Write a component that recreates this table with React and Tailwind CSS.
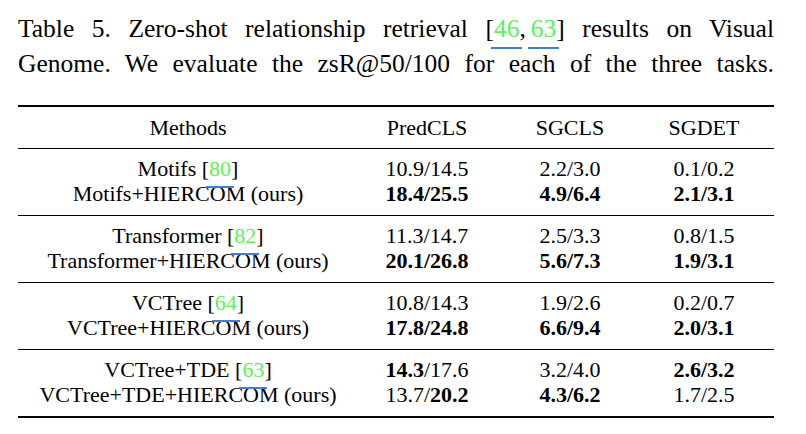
import React from "react";

const Cite = ({ n, ul }) => (
  <span className="relative text-[#5ef05a]">
    {n}
    <span className={`absolute left-[-3px] right-[-3px] h-[2px] bg-[#3f7fd6] ${ul}`} />
  </span>
);

const B = ({ children }) => <span className="font-bold">{children}</span>;

const Row = ({ m, a, b, c }) => (
  <div className="grid grid-cols-[340px_138px_148px_120px] h-[25px] leading-[25px] text-center whitespace-nowrap">
    <div>{m}</div>
    <div>{a}</div>
    <div>{b}</div>
    <div>{c}</div>
  </div>
);

const Group = ({ children }) => (
  <div className="border-t border-black pt-[7px] pb-[9px]">{children}</div>
);

export default function App() {
  return (
    <div className="w-[806px] h-[434px] bg-white text-black pl-[18px] pr-[32px] font-['Liberation_Serif','Times_New_Roman',serif]">
      <div className="pt-[12px] text-[25.5px] leading-[34.5px]">
        <div className="whitespace-nowrap text-justify [text-align-last:justify]">
          Table 5. Zero-shot relationship retrieval [<Cite n="46" ul="top-[33px]" />,<span className="inline-block w-[5px]" /><Cite n="63" ul="top-[33px]" />] results on Visual
        </div>
        <div className="whitespace-nowrap text-justify [text-align-last:justify]">
          Genome. We evaluate the zsR@50/100 for each of the three tasks.
        </div>
      </div>

      <div className="mt-[24px] text-[22px]">
        <div className="h-[2px] bg-black" />
        <div className="pt-[8px] pb-[8px]">
          <Row m="Methods" a="PredCLS" b="SGCLS" c="SGDET" />
        </div>
        <Group>
          <Row m={<>Motifs [<Cite n="80" ul="top-[30px]" />]</>} a="10.9/14.5" b="2.2/3.0" c="0.1/0.2" />
          <Row m="Motifs+HIERCOM (ours)" a={<B>18.4/25.5</B>} b={<B>4.9/6.4</B>} c={<B>2.1/3.1</B>} />
        </Group>
        <Group>
          <Row m={<>Transformer [<Cite n="82" ul="top-[30px]" />]</>} a="11.3/14.7" b="2.5/3.3" c="0.8/1.5" />
          <Row m="Transformer+HIERCOM (ours)" a={<B>20.1/26.8</B>} b={<B>5.6/7.3</B>} c={<B>1.9/3.1</B>} />
        </Group>
        <Group>
          <Row m={<>VCTree [<Cite n="64" ul="top-[30px]" />]</>} a="10.8/14.3" b="1.9/2.6" c="0.2/0.7" />
          <Row m="VCTree+HIERCOM (ours)" a={<B>17.8/24.8</B>} b={<B>6.6/9.4</B>} c={<B>2.0/3.1</B>} />
        </Group>
        <Group>
          <Row m={<>VCTree+TDE [<Cite n="63" ul="top-[30px]" />]</>} a={<><B>14.3</B>/17.6</>} b="3.2/4.0" c={<B>2.6/3.2</B>} />
          <Row m="VCTree+TDE+HIERCOM (ours)" a={<>13.7/<B>20.2</B></>} b={<B>4.3/6.2</B>} c="1.7/2.5" />
        </Group>
        <div className="h-[2px] bg-black" />
      </div>
    </div>
  );
}
